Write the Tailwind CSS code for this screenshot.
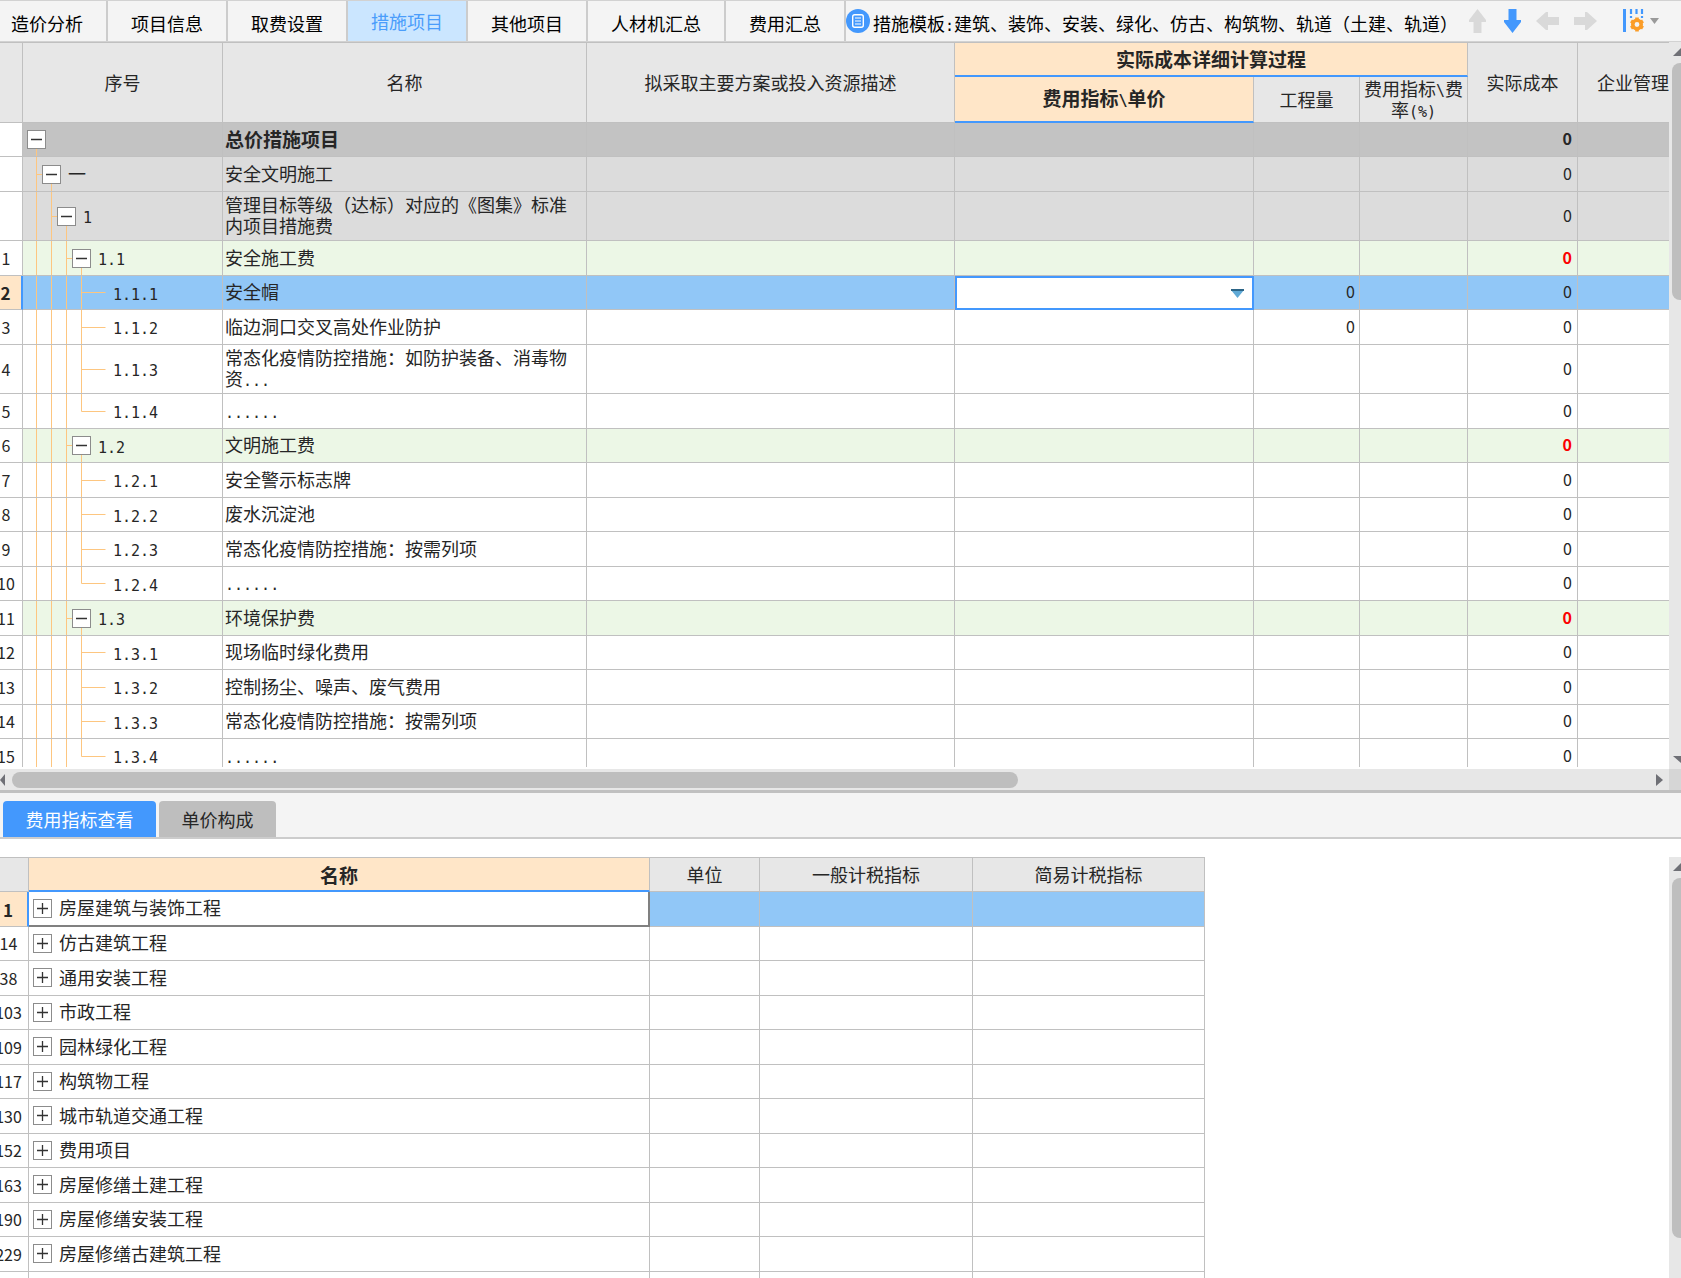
<!DOCTYPE html>
<html lang="zh-CN">
<head>
<meta charset="utf-8">
<meta name="viewport" content="width=device-width, initial-scale=1">
<title>措施项目</title>
<script src="https://cdn.jsdelivr.net/npm/@tailwindcss/browser@4"></script>
</head>
<body class="flex h-screen flex-col overflow-hidden bg-white font-['Noto_Sans_CJK_SC',sans-serif] text-[18px] leading-[21px] text-[#262626]">

<!-- Page tabs and template toolbar -->
<header class="flex h-[42px] shrink-0 items-stretch overflow-hidden border-y border-[#d2d2d2] bg-[#f4f4f4] whitespace-nowrap text-black">
  <nav class="-ml-[12px] flex shrink-0" aria-label="页面">
    <button class="w-[120px] border-r-2 border-[#cccccc] pt-1">造价分析</button>
    <button class="w-[120px] border-r-2 border-[#cccccc] pt-1">项目信息</button>
    <button class="w-[120px] border-r-2 border-[#cccccc] pt-1">取费设置</button>
    <button class="w-[120px] border-r-2 border-[#cccccc] bg-[#cbe6ff] pt-px text-[#4a9dfb]" aria-current="page">措施项目</button>
    <button class="w-[120px] border-r-2 border-[#cccccc] pt-1">其他项目</button>
    <button class="w-[138px] border-r-2 border-[#cccccc] pt-1">人材机汇总</button>
    <button class="w-[120px] border-r-2 border-[#cccccc] pt-1">费用汇总</button>
  </nav>
  <div class="flex shrink-0 items-center">
    <button class="flex items-center gap-[3px]">
      <svg class="size-6" viewBox="0 0 24 24" fill="none"><circle cx="12" cy="12" r="12" fill="#4398fd"/><rect x="6.7" y="5.7" width="10.6" height="12.6" rx="2" stroke="#fff" stroke-width="1.4"/><path d="M9 9h6M9 12h6M9 15h6" stroke="#fff" stroke-width="1.2"/></svg>
      <span class="pt-1">措施模板<span class="font-['DejaVu_Sans_Mono',monospace] text-[15px] leading-none">:</span>建筑、装饰、安装、绿化、仿古、构筑物、轨道（土建、轨道）</span>
    </button>
    <button class="ml-[11px]" aria-label="上移"><svg class="h-6 w-[17px]" viewBox="0 0 17 24"><path d="M8.500 0 17 11v2h-4.500v11h-8V13H0v-2z" fill="#d9d9d9"/></svg></button>
    <button class="ml-[18px]" aria-label="下移"><svg class="h-6 w-[17px]" viewBox="0 0 17 24"><path d="M8.500 24 17 13v-2h-4.500V0h-8v11H0v2z" fill="#4398fd"/></svg></button>
    <button class="ml-[15px]" aria-label="升级"><svg class="h-[18px] w-[23px]" viewBox="0 0 23 18"><path d="M0 9 10 0h2v5h11v8H12v5h-2z" fill="#d9d9d9"/></svg></button>
    <button class="ml-[15px]" aria-label="降级"><svg class="h-[18px] w-[23px]" viewBox="0 0 23 18"><path d="M23 9 13 0h-2v5H0v8h11v5h2z" fill="#d9d9d9"/></svg></button>
    <button class="ml-[26px] flex items-center gap-[6px]" aria-label="列设置">
      <svg class="h-6 w-[21px]" viewBox="0 0 21 24"><path d="M1.500 0v23" stroke="#4398fd" stroke-width="3"/><path d="M8 0v5M8 7v2M13.500 0v5M19 0v5M19 7v2" stroke="#4398fd" stroke-width="2.200"/><circle cx="14" cy="15.500" r="4.200" fill="none" stroke="#fb9d28" stroke-width="3.600"/><path d="M14 8.500v3M14 19.500v3M8 12l2.500 1.500M17.500 17.500 20 19M8 19l2.500-1.500M17.500 13.500 20 12" stroke="#fb9d28" stroke-width="3.600"/></svg>
      <svg class="h-[6px] w-[9px]" viewBox="0 0 9 6"><path d="M0 0h9L4.500 6z" fill="#9a9a9a"/></svg>
    </button>
  </div>
</header>

<!-- Measures grid -->
<section class="flex min-h-0 grow-[727] basis-0" aria-label="措施项目">
  <div class="mb-[2px] min-w-0 flex-1 overflow-hidden">
    <table class="-ml-[10px] w-[calc(100%+10px)] table-fixed border-separate border-spacing-0 border-t border-[#c0c0c0]">
      <colgroup>
        <col class="w-[33px]"><col class="w-[200px]"><col class="w-[364px]"><col class="w-[368px]"><col class="w-[299px]"><col class="w-[106px]"><col class="w-[108px]"><col class="w-[110px]"><col>
      </colgroup>
      <thead class="bg-[#e7e7e7]">
        <tr class="h-[34px]">
          <th rowspan="2" class="border-r border-b border-[#c0c0c0]"></th>
          <th rowspan="2" class="border-r border-b border-[#c0c0c0] font-normal">序号</th>
          <th rowspan="2" class="border-r border-b border-[#c0c0c0] font-normal">名称</th>
          <th rowspan="2" class="border-r border-b border-[#c0c0c0] font-normal">拟采取主要方案或投入资源描述</th>
          <th colspan="3" class="border-r border-b-2 border-r-[#c0c0c0] border-b-[#4398fd] bg-[#ffe6c8] pb-[2px] text-[19px] font-bold">实际成本详细计算过程</th>
          <th rowspan="2" class="border-r border-b border-[#c0c0c0] font-normal">实际成本</th>
          <th rowspan="2" class="border-b border-[#c0c0c0] pl-[19px] text-left font-normal whitespace-nowrap">企业管理</th>
        </tr>
        <tr class="h-[46px]">
          <th class="border-r border-b-2 border-r-[#c0c0c0] border-b-[#4398fd] bg-[#ffe6c8] pb-[2px] text-[19px] font-bold">费用指标<span class="font-['DejaVu_Sans_Mono',monospace] text-[15px] leading-none">\</span>单价</th>
          <th class="border-r border-b border-[#c0c0c0] font-normal">工程量</th>
          <th class="border-r border-b border-[#c0c0c0] pb-px leading-[20px] font-normal">费用指标<span class="font-['DejaVu_Sans_Mono',monospace] text-[15px] leading-none">\</span>费<br>率<span class="font-['DejaVu_Sans_Mono',monospace] text-[15px] leading-none">(%)</span></th>
        </tr>
      </thead>
      <tbody id="measures"></tbody>
    </table>
  </div>
  <div class="flex w-3 shrink-0 flex-col items-end overflow-hidden bg-[#e7e7e7]">
    <button class="mt-[6px] block h-[8px] w-[8px] shrink-0" aria-label="向上滚动"><svg class="h-[8px] w-[8px]" viewBox="0 0 8 8"><path d="M0 8 8 0v8z" fill="#6f7076"/></svg></button>
    <div class="mt-[7px] h-[calc(33%-3px)] w-[9px] rounded-l-lg bg-[#bebebe]"></div>
    <button class="mt-auto mb-[6px] block h-[7px] w-[8px] shrink-0" aria-label="向下滚动"><svg class="h-[7px] w-[8px]" viewBox="0 0 8 7"><path d="M0 0h8v7z" fill="#6f7076"/></svg></button>
  </div>
</section>

<!-- Horizontal scrollbar -->
<div class="flex h-[21px] shrink-0 bg-[#e7e7e7]">
  <div class="flex flex-1 items-center">
    <button class="w-3" aria-label="向左滚动"><svg class="h-[12px] w-[5px]" viewBox="0 0 5 12"><path d="M5 0v12L0 6z" fill="#6f7076"/></svg></button>
    <div class="h-4 w-[calc(61%-12px)] rounded-full bg-[#bebebe]"></div>
    <button class="mr-[6px] ml-auto" aria-label="向右滚动"><svg class="h-[12px] w-[7px]" viewBox="0 0 7 12"><path d="M0 0v12l7-6z" fill="#6f7076"/></svg></button>
  </div>
  <div class="w-3 bg-[#d6d6d6]"></div>
</div>
<div class="h-[3px] shrink-0 bg-[#c0c0c0]"></div>

<!-- Detail pane -->
<section class="flex min-h-0 grow-[485] basis-0 flex-col" aria-label="明细">
  <div class="flex h-[46px] shrink-0 items-end gap-[3px] border-b-2 border-[#cccccc] bg-[#f4f4f4] pl-[3px]" role="tablist">
    <button role="tab" aria-selected="true" class="h-[36px] w-[153px] rounded-t-sm bg-[#4398fd] text-white">费用指标查看</button>
    <button role="tab" aria-selected="false" class="h-[36px] w-[117px] rounded-t-sm bg-[#bebebe]">单价构成</button>
  </div>
  <div class="mt-[18px] flex min-h-0 flex-1">
    <div class="min-w-0 flex-1 overflow-hidden">
      <table class="-ml-[11px] w-[1216px] table-fixed border-separate border-spacing-0 border-t border-[#c0c0c0]">
        <colgroup>
          <col class="w-[40px]"><col class="w-[621px]"><col class="w-[110px]"><col class="w-[213px]"><col class="w-[232px]">
        </colgroup>
        <thead class="bg-[#e7e7e7]">
          <tr class="h-[34px]">
            <th class="border-r border-b border-[#c0c0c0]"></th>
            <th class="border-r border-b-2 border-r-[#c0c0c0] border-b-[#4398fd] bg-[#ffe6c8] text-[19px] font-bold">名称</th>
            <th class="border-r border-b border-[#c0c0c0] font-normal">单位</th>
            <th class="border-r border-b border-[#c0c0c0] font-normal">一般计税指标</th>
            <th class="border-r border-b border-[#c0c0c0] font-normal">简易计税指标</th>
          </tr>
        </thead>
        <tbody id="indicators"></tbody>
      </table>
    </div>
    <div class="flex w-3 shrink-0 flex-col items-end overflow-hidden bg-[#e7e7e7]">
      <button class="mt-[6px] block h-[8px] w-[8px] shrink-0" aria-label="向上滚动"><svg class="h-[8px] w-[8px]" viewBox="0 0 8 8"><path d="M0 8 8 0v8z" fill="#6f7076"/></svg></button>
      <div class="mt-[7px] mb-[40px] w-[9px] flex-1 rounded-l-lg bg-[#bebebe]"></div>
    </div>
  </div>
</section>

<script>
const GUIDE = '#fdc680';

// level: tree depth; kind: row colouring; last: final leaf of its group
const measures = [
  { no: '', code: '', name: '总价措施项目', level: 0, kind: 'root', open: true },
  { no: '', code: '一', name: '安全文明施工', level: 1, kind: 'part', open: true },
  { no: '', code: '1', name: '管理目标等级（达标）对应的《图集》标准内项目措施费', level: 2, kind: 'part', open: true, tall: true },
  { no: 1, code: '1.1', name: '安全施工费', level: 3, kind: 'group', open: true },
  { no: 2, code: '1.1.1', name: '安全帽', level: 4, kind: 'selected', qty: '0' },
  { no: 3, code: '1.1.2', name: '临边洞口交叉高处作业防护', level: 4, qty: '0' },
  { no: 4, code: '1.1.3', name: '常态化疫情防控措施：如防护装备、消毒物资', dots: '...', level: 4, tall: true },
  { no: 5, code: '1.1.4', name: '', dots: '......', level: 4, last: true },
  { no: 6, code: '1.2', name: '文明施工费', level: 3, kind: 'group', open: true },
  { no: 7, code: '1.2.1', name: '安全警示标志牌', level: 4 },
  { no: 8, code: '1.2.2', name: '废水沉淀池', level: 4 },
  { no: 9, code: '1.2.3', name: '常态化疫情防控措施：按需列项', level: 4 },
  { no: 10, code: '1.2.4', name: '', dots: '......', level: 4, last: true },
  { no: 11, code: '1.3', name: '环境保护费', level: 3, kind: 'group', open: true },
  { no: 12, code: '1.3.1', name: '现场临时绿化费用', level: 4 },
  { no: 13, code: '1.3.2', name: '控制扬尘、噪声、废气费用', level: 4 },
  { no: 14, code: '1.3.3', name: '常态化疫情防控措施：按需列项', level: 4 },
  { no: 15, code: '1.3.4', name: '', dots: '......', level: 4, last: true }
];

const rowBg = { root: 'bg-[#c3c3c3]', part: 'bg-[#dcdcdc]', group: 'bg-[#ecf7e6]', selected: 'bg-[#91c7f7]' };
const indent = ['pl-[4px]', 'pl-[19px]', 'pl-[34px]', 'pl-[49px]', 'pl-[90px]'];

// Connector lines drawn behind the tree column
function guides(r, h) {
  const x = n => 13.5 + 15 * n, mid = Math.floor(h / 2) + 0.5;
  let d = '';
  const through = r.level === 4 ? 3 : r.level;
  for (let n = 0; n < through; n++) d += `M${x(n)} 0V${h}`;
  if (r.level === 4) d += `M${x(3)} 0V${r.last ? mid : h}M${x(3)} ${mid}h24`;
  else {
    d += `M${x(r.level)} ${mid}V${h}`;
    if (r.level > 0) d += `M${x(r.level - 1)} ${mid}h8`;
  }
  return `<svg class="absolute inset-0" width="199" height="${h}" fill="none" stroke="${GUIDE}"><path d="${d}"/></svg>`;
}

const minus = `<button aria-label="折叠" class="flex size-[19px] shrink-0 items-center justify-center border border-[#8c8c8c] bg-white"><svg width="11" height="11"><path d="M0 5.500h11" stroke="#333" stroke-width="1.500"/></svg></button>`;
const plus = `<button aria-label="展开" class="flex size-[19px] shrink-0 items-center justify-center border border-[#8c8c8c] bg-white"><svg width="11" height="11"><path d="M0 5.500h11M5.500 0v11" stroke="#333" stroke-width="1.300"/></svg></button>`;
const mono = t => `<span class="font-['DejaVu_Sans_Mono',monospace] text-[15px] leading-none">${t}</span>`;

document.getElementById('measures').innerHTML = measures.map((r, i) => {
  const h = r.tall ? 49 : i % 2 ? 35 : 34;
  const hc = r.tall ? 'h-[49px]' : i % 2 ? 'h-[35px]' : 'h-[34px]';
  const inner = r.tall ? 'h-[48px]' : i % 2 ? 'h-[34px]' : 'h-[33px]';
  const cell = 'border-r border-b border-[#c0c0c0] p-0';
  const sel = r.kind === 'selected';
  const numCell = sel
    ? 'border-r-2 border-b border-r-[#4398fd] border-b-[#c0c0c0] bg-[#ffe6c8] p-0 text-center text-[17px] font-bold'
    : 'border-r border-b border-[#c0c0c0] bg-white p-0 text-center text-[16px] font-normal';
  const costStyle = r.kind === 'group' ? 'font-bold text-[#fb0000]' : r.kind === 'root' ? 'font-bold' : '';
  const code = r.code === '一' ? r.code : mono(r.code);
  return `<tr class="${hc} ${rowBg[r.kind] || 'bg-white'}">
    <th scope="row" class="${numCell}">${r.no}</th>
    <td class="${cell}"><div class="relative overflow-hidden ${inner}">${guides(r, h - 1)}<div class="relative flex h-full items-center gap-[7px] ${indent[r.level]}">${r.open ? minus : ''}<span class="pb-px">${code}</span></div></div></td>
    <td class="${cell}"><div class="pr-3 pb-[2px] pl-[2px] ${r.kind === 'root' ? 'text-[19px] font-bold' : ''}">${r.name}${r.dots ? mono(r.dots) : ''}</div></td>
    <td class="${cell}"></td>
    <td class="${sel ? 'p-0' : cell}">${sel ? `<div class="relative ${hc}"><select aria-label="费用指标\\单价" class="block h-full w-full appearance-none border-2 border-[#4398fd] bg-white px-2"><option></option></select><svg class="pointer-events-none absolute top-[13px] right-[10px]" width="13" height="9"><path d="M0 1h13L6.500 9z" fill="#5fa9d6"/><path d="M0 1h13" stroke="#2c6587" stroke-width="2"/></svg></div>` : ''}</td>
    <td class="${cell}"><div class="pr-1 pb-[2px] text-right text-[16px]">${r.qty || ''}</div></td>
    <td class="${cell}"></td>
    <td class="${cell}"><div class="pr-[5px] pb-[2px] text-right text-[16px] ${costStyle}">0</div></td>
    <td class="border-b border-[#c0c0c0] p-0"></td>
  </tr>`;
}).join('');

const indicators = [
  [1, '房屋建筑与装饰工程'], [14, '仿古建筑工程'], [38, '通用安装工程'], [103, '市政工程'],
  [109, '园林绿化工程'], [117, '构筑物工程'], [130, '城市轨道交通工程'], [152, '费用项目'],
  [163, '房屋修缮土建工程'], [190, '房屋修缮安装工程'], [229, '房屋修缮古建筑工程'], ['', '']
];

document.getElementById('indicators').innerHTML = indicators.map(([no, name], i) => {
  const cell = 'border-r border-b border-[#c0c0c0] p-0';
  const sel = i === 0;
  return `<tr class="${i % 2 ? 'h-[34px]' : 'h-[35px]'} ${sel ? 'bg-[#91c7f7]' : 'bg-white'}">
    <th scope="row" class="${sel ? 'border-r-2 border-b border-r-[#4398fd] border-b-[#c0c0c0] bg-[#ffe6c8] p-0 text-center text-[17px] font-bold' : 'border-r border-b border-[#c0c0c0] p-0 text-center text-[16px] font-normal'}">${no}</th>
    <td class="${sel ? 'border-r-2 border-b-2 border-[#808080] bg-white p-0' : cell}"><div class="flex items-center gap-[7px] pb-px pl-1">${name ? plus : ''}<span class="pb-px">${name}</span></div></td>
    <td class="${cell}"></td><td class="${cell}"></td><td class="${cell}"></td>
  </tr>`;
}).join('');
</script>
</body>
</html>
